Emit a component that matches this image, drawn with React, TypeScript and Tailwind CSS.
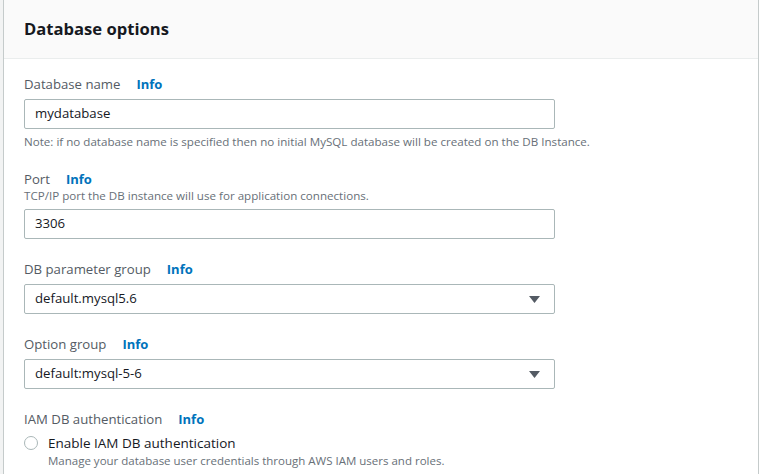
import React from "react";

const font = { fontFamily: '"Open Sans", "Noto Sans", Arial, sans-serif' };

function Label({ text }: { text: string }) {
  return (
    <div className="flex items-baseline text-[13.2px] leading-[20px] text-[#545b64]">
      <span>{text}</span>
      <span className="ml-[16px] text-[13px] font-bold text-[#0073bb]">Info</span>
    </div>
  );
}

function Input({ value }: { value: string }) {
  return (
    <div className="w-[531px] h-[30px] border border-[#aab7b8] rounded-[2px] flex items-center pl-[10px] text-[13.2px] text-[#16191f]">
      {value}
    </div>
  );
}

function Select({ value }: { value: string }) {
  return (
    <div className="w-[531px] h-[30px] border border-[#aab7b8] rounded-[2px] flex items-center justify-between pl-[10px] pr-[14px] text-[13.2px] text-[#16191f]">
      <span>{value}</span>
      <svg width="11" height="7" viewBox="0 0 11 7">
        <polygon points="0,0 11,0 5.5,7" fill="#545b64" />
      </svg>
    </div>
  );
}

export default function App() {
  return (
    <div className="w-[759px] h-[474px] overflow-hidden bg-[#f2f3f3] flex" style={font}>
      <div className="ml-[3px] w-[756px] h-full bg-white border-l border-r border-[#c5cbcb] flex flex-col">
        <div className="h-[59px] bg-[#fafafa] border-b border-[#eaeded] flex items-center pl-[20px]">
          <h2 className="text-[16.6px] font-bold text-[#16191f]">Database options</h2>
        </div>
        <div className="pl-[20px] flex flex-col">
          <div className="mt-[15px]">
            <Label text="Database name" />
          </div>
          <div className="mt-[5px]">
            <Input value="mydatabase" />
          </div>
          <div className="mt-[5px] text-[11.6px] leading-[16px] text-[#687078]">
            Note: if no database name is specified then no initial MySQL database will be created on the DB Instance.
          </div>
          <div className="mt-[19px]">
            <Label text="Port" />
          </div>
          <div className="mt-[-1px] text-[11.6px] leading-[16px] text-[#687078]">
            TCP/IP port the DB instance will use for application connections.
          </div>
          <div className="mt-[5px]">
            <Input value="3306" />
          </div>
          <div className="mt-[20px]">
            <Label text="DB parameter group" />
          </div>
          <div className="mt-[5px]">
            <Select value="default.mysql5.6" />
          </div>
          <div className="mt-[20px]">
            <Label text="Option group" />
          </div>
          <div className="mt-[5px]">
            <Select value="default:mysql-5-6" />
          </div>
          <div className="mt-[20px]">
            <Label text="IAM DB authentication" />
          </div>
          <div className="mt-[4px] flex items-start">
            <div className="w-[14px] h-[14px] mt-[3px] rounded-full border border-[#aab7b8] bg-white" />
            <div className="ml-[10px] flex flex-col">
              <span className="text-[13.5px] leading-[20px] text-[#16191f]">Enable IAM DB authentication</span>
              <span className="text-[11.5px] leading-[16px] text-[#687078]">
                Manage your database user credentials through AWS IAM users and roles.
              </span>
            </div>
          </div>
        </div>
      </div>
    </div>
  );
}
